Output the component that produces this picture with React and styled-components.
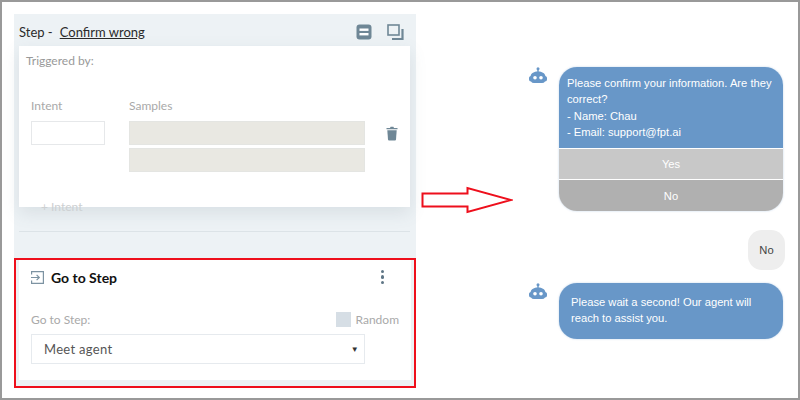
import React from 'react'
import styled, { createGlobalStyle } from 'styled-components'

const GlobalStyle = createGlobalStyle`
  html, body { margin: 0; padding: 0; background: #fff; }
  * { box-sizing: border-box; }
`

const Frame = styled.div`
  width: 800px;
  height: 400px;
  display: flex;
  align-items: flex-start;
  padding: 12px 0 0 12px;
  border: 2px solid #999;
  background: #fff;
  overflow: hidden;
  font-family: Lato, "Noto Sans", sans-serif;
`

const Panel = styled.div`
  width: 402px;
  flex: none;
  display: flex;
  flex-direction: column;
  background: #edf2f5;
`
const StepHeader = styled.div`
  height: 32px;
  display: flex;
  align-items: center;
  padding: 3px 12px 0 5px;
  font-size: 13px;
  color: #2b2b2b;
`
const StepName = styled.span`
  margin-left: 7px;
  text-decoration: underline;
`
const HeaderIcons = styled.div`
  margin-left: auto;
  display: flex;
  gap: 15px;
`
const TriggerCard = styled.div`
  position: relative;
  height: 161px;
  margin: 0 6px 0 5px;
  padding: 7px 7px;
  background: #fff;
  box-shadow: 0 6px 16px rgba(90, 110, 125, 0.14);
`
const FieldLabel = styled.div`
  font-size: 12px;
  line-height: 15px;
  color: ${props => props.$faint ? '#a9a9a9' : '#999'};
`
const IntentGrid = styled.div`
  display: grid;
  grid-template-columns: 74px 236px 11px;
  column-gap: 24px;
  margin: 30px 0 0 5px;
`
const Column = styled.div`
  display: flex;
  flex-direction: column;
`
const IntentInput = styled.div`
  height: 24px;
  margin-top: 8px;
  background: #fff;
  border: 1px solid #e6e8ea;
`
const SampleInput = styled.div`
  height: 24px;
  margin-top: ${props => props.$first ? '8px' : '3px'};
  background: #e9e8e2;
  border: 1px solid #e4e5e2;
`
const TrashCell = styled.div`
  margin: 27px 0 0 -3px;
`
const AddIntent = styled.div`
  position: absolute;
  left: 22px;
  top: 153px;
  font-size: 12px;
  line-height: 15px;
  color: #cdd0d2;
`
const Divider = styled.div`
  height: 1px;
  margin: 24px 6px 0 5px;
  background: #dce3e7;
`
const GoToSection = styled.div`
  margin-top: 26px;
  padding: 0 3px 6px;
  border: 2px solid #ee0f1c;
`
const GoToCard = styled.div`
  height: 120px;
  background: #fff;
  padding: 0 12px;
`
const GoToHeader = styled.div`
  height: 34px;
  display: flex;
  align-items: center;
  gap: 7px;
  font-size: 14px;
  font-weight: 700;
  color: #111;
`
const Kebab = styled.div`
  margin: 0 15px 0 auto;
  display: flex;
  flex-direction: column;
  gap: 2px;
`
const Dot = styled.span`
  width: 3.5px;
  height: 3.5px;
  border-radius: 50%;
  background: #5f7686;
`
const GoToRow = styled.div`
  display: flex;
  align-items: center;
  height: 17px;
  margin-top: 17px;
`
const RandomBox = styled.span`
  width: 15px;
  height: 15px;
  margin: 0 5px 0 auto;
  background: #d6dee5;
`
const FakeSelect = styled.div`
  width: 334px;
  height: 30px;
  margin-top: 6px;
  padding: 0 5px 0 12px;
  display: flex;
  align-items: center;
  justify-content: space-between;
  border: 1px solid #e6eaee;
  font-size: 13px;
  letter-spacing: 0.3px;
  color: #555;
`
const Caret = styled.span`
  font-size: 8px;
  color: #333;
`

const ArrowSvg = styled.svg`
  flex: none;
  margin-top: 172px;
  margin-left: 5px;
`

const Chat = styled.div`
  width: 256px;
  margin: 53px 0 0 16px;
  display: flex;
  flex-direction: column;
  font-family: "Liberation Sans", Arial, sans-serif;
  font-size: 11.2px;
`
const BotRow = styled.div`
  display: flex;
  align-items: flex-start;
  gap: 12px;
`
const BubbleStack = styled.div`
  width: 224px;
  border-radius: 18px;
  overflow: hidden;
  box-shadow: 0 0 2px rgba(104, 151, 201, 0.45);
`
const BubbleText = styled.div`
  height: ${props => props.$height}px;
  padding: ${props => props.$pad};
  background: #6897c8;
  color: #fff;
  line-height: 16.4px;
`
const ChoiceButton = styled.div`
  height: ${props => props.$height}px;
  margin-top: ${props => props.$gap}px;
  display: flex;
  align-items: center;
  justify-content: center;
  background: ${props => props.$bg};
  color: #fff;
`
const UserBubble = styled.div`
  align-self: flex-end;
  width: 37px;
  height: 40px;
  margin: 19px 0 13px;
  display: flex;
  align-items: center;
  justify-content: center;
  border-radius: 14px;
  background: #eee;
  color: #444;
`

const MinimizeIcon = () => (
  <svg width="16" height="16" viewBox="0 0 16 16">
    <rect x="0.5" y="0.5" width="15" height="15" rx="3" fill="#6f8796" />
    <rect x="3.5" y="4.5" width="9" height="2.4" fill="#fff" />
    <rect x="3.5" y="9" width="9" height="2.4" fill="#fff" />
  </svg>
)

const CopyIcon = () => (
  <svg width="17" height="16" viewBox="0 0 17 16" fill="none">
    <rect x="1" y="1" width="11" height="10" stroke="#6f8796" strokeWidth="1.6" />
    <path d="M15.5 5v10H5" stroke="#6f8796" strokeWidth="2.2" />
  </svg>
)

const TrashIcon = () => (
  <svg width="12" height="15" viewBox="0 0 12 15">
    <path d="M0.5 2h3.500l0.600-1.200h2.800L8 2h3.500v1.300H0.500z" fill="#6f8796" />
    <path d="M1.300 4.200h9.400l-0.700 9.300q-0.100 1-1 1H3q-0.900 0-1-1z" fill="#6f8796" />
  </svg>
)

const GoToIcon = () => (
  <svg width="13" height="13" viewBox="0 0 13 13" fill="none" stroke="#7d93a2" strokeWidth="1.2">
    <path d="M0.600 3.500V0.600h11.800v11.800H0.600V9.500" />
    <path d="M0 6.500h8M5.600 3.800l2.700 2.700-2.700 2.700" />
  </svg>
)

const BotIcon = () => (
  <svg width="18" height="17" viewBox="0 0 18 17" style={{ flex: 'none' }}>
    <circle cx="9" cy="1.700" r="1.500" fill="#6897c8" />
    <rect x="8.300" y="2" width="1.400" height="3" fill="#6897c8" />
    <path d="M0 11a2 2 0 0 1 1.600-2C2.200 6 5 4.500 9 4.500S15.800 6 16.400 9A2 2 0 0 1 18 11v1.500a2 2 0 0 1-2 2q-1 1.500-3 1.500H5q-2 0-3-1.500a2 2 0 0 1-2-2z" fill="#6897c8" />
    <circle cx="6" cy="10.700" r="1.800" fill="#fff" />
    <circle cx="12" cy="10.700" r="1.800" fill="#fff" />
  </svg>
)

const App = () => (
  <Frame>
    <GlobalStyle />
    <Panel>
      <StepHeader>
        Step -
        <StepName>Confirm wrong</StepName>
        <HeaderIcons>
          <MinimizeIcon />
          <CopyIcon />
        </HeaderIcons>
      </StepHeader>
      <TriggerCard>
        <FieldLabel>Triggered by:</FieldLabel>
        <IntentGrid>
          <Column>
            <FieldLabel $faint>Intent</FieldLabel>
            <IntentInput />
          </Column>
          <Column>
            <FieldLabel $faint>Samples</FieldLabel>
            <SampleInput $first />
            <SampleInput />
          </Column>
          <TrashCell>
            <TrashIcon />
          </TrashCell>
        </IntentGrid>
        <AddIntent>+ Intent</AddIntent>
      </TriggerCard>
      <Divider />
      <GoToSection>
        <GoToCard>
          <GoToHeader>
            <GoToIcon />
            Go to Step
            <Kebab>
              <Dot />
              <Dot />
              <Dot />
            </Kebab>
          </GoToHeader>
          <GoToRow>
            <FieldLabel $faint>Go to Step:</FieldLabel>
            <RandomBox />
            <FieldLabel $faint>Random</FieldLabel>
          </GoToRow>
          <FakeSelect>
            Meet agent
            <Caret>▼</Caret>
          </FakeSelect>
        </GoToCard>
      </GoToSection>
    </Panel>

    <ArrowSvg width="92" height="28" viewBox="0 0 92 28" fill="none">
      <path d="M1.500 7.500H46.500V2L90 14L46.500 26V20.500H1.500Z" stroke="#ee0f1c" strokeWidth="2" />
    </ArrowSvg>

    <Chat>
      <BotRow>
        <BotIcon />
        <BubbleStack>
          <BubbleText $height={81} $pad="8px 8px">
            Please confirm your information. Are they correct?
            <br />- Name: Chau
            <br />- Email: support@fpt.ai
          </BubbleText>
          <ChoiceButton $height={30} $gap={1} $bg="#c8c8c8">Yes</ChoiceButton>
          <ChoiceButton $height={31} $gap={1} $bg="#b0b0b0">No</ChoiceButton>
        </BubbleStack>
      </BotRow>
      <UserBubble>No</UserBubble>
      <BotRow>
        <BotIcon />
        <BubbleStack>
          <BubbleText $height={56} $pad="11px 12px">
            Please wait a second! Our agent will reach to assist you.
          </BubbleText>
        </BubbleStack>
      </BotRow>
    </Chat>
  </Frame>
)

export default App
